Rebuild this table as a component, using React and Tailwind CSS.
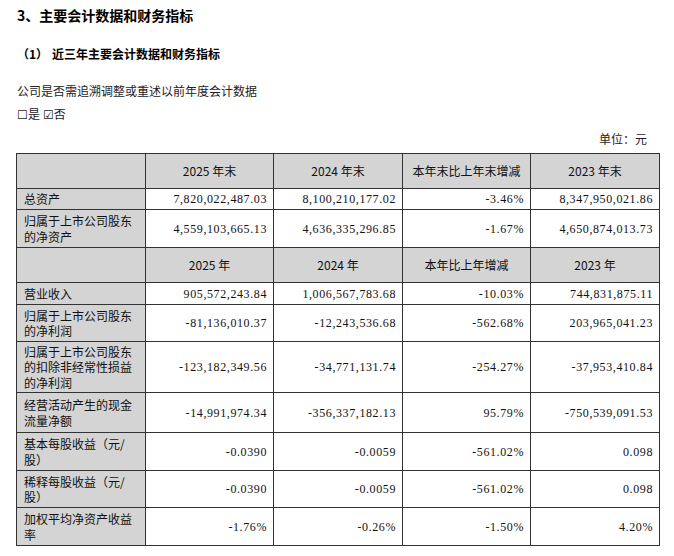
import React from "react";

const cn = '"Noto Sans CJK SC", "Liberation Serif", serif';
const num = '"Liberation Serif", "Noto Sans CJK SC", serif';

const endRows = [
  { label: ["总资产"], h: "h-[21px]", v: ["7,820,022,487.03", "8,100,210,177.02", "-3.46%", "8,347,950,021.86"] },
  { label: ["归属于上市公司股东", "的净资产"], h: "h-[38px]", v: ["4,559,103,665.13", "4,636,335,296.85", "-1.67%", "4,650,874,013.73"] },
];

const yearRows = [
  { label: ["营业收入"], h: "h-[22px]", v: ["905,572,243.84", "1,006,567,783.68", "-10.03%", "744,831,875.11"] },
  { label: ["归属于上市公司股东", "的净利润"], h: "h-[37px]", v: ["-81,136,010.37", "-12,243,536.68", "-562.68%", "203,965,041.23"] },
  { label: ["归属于上市公司股东", "的扣除非经常性损益", "的净利润"], h: "h-[51px]", v: ["-123,182,349.56", "-34,771,131.74", "-254.27%", "-37,953,410.84"] },
  { label: ["经营活动产生的现金", "流量净额"], h: "h-[40px]", v: ["-14,991,974.34", "-356,337,182.13", "95.79%", "-750,539,091.53"] },
  { label: ["基本每股收益（元/", "股）"], h: "h-[38px]", v: ["-0.0390", "-0.0059", "-561.02%", "0.098"] },
  { label: ["稀释每股收益（元/", "股）"], h: "h-[37px]", v: ["-0.0390", "-0.0059", "-561.02%", "0.098"] },
  { label: ["加权平均净资产收益", "率"], h: "h-[38px]", v: ["-1.76%", "-0.26%", "-1.50%", "4.20%"] },
];

const cell = "border-[1.5px] border-[#333]";

const HeadRow = ({ cols }) => (
  <tr className="h-[35px] bg-[#d4d4d4]">
    <td className={cell}></td>
    {cols.map((c) => (
      <td key={c} className={`${cell} text-center`}>
        {c}
      </td>
    ))}
  </tr>
);

const DataRow = ({ row }) => (
  <tr className={row.h}>
    <td className={`${cell} bg-[#d4d4d4] px-[7px] leading-[15.5px] align-middle`}>
      {row.label.map((l, i) => (
        <div key={i}>{l}</div>
      ))}
    </td>
    {row.v.map((x, i) => (
      <td
        key={i}
        className={`${cell} bg-white pr-[6px] text-right tracking-[0.6px]`}
        style={{ fontFamily: num }}
      >
        {x}
      </td>
    ))}
  </tr>
);

export default function App() {
  return (
    <div className="w-[674px] h-[556px] bg-white text-black pl-[17px] pr-[15px]" style={{ fontFamily: cn }}>
      <div className="pt-[5px] text-[14px] leading-[20px] font-bold">3、主要会计数据和财务指标</div>
      <div className="mt-[19px] text-[12px] leading-[20px] font-bold">
        （1）<span className="ml-[4px]">近三年主要会计数据和财务指标</span>
      </div>
      <div className="mt-[17px] text-[12px] leading-[20px] text-[#222]">公司是否需追溯调整或重述以前年度会计数据</div>
      <div className="mt-[3px] text-[12px] leading-[20px] text-[#222]">
        ☐是 ☑否
      </div>
      <div className="mt-[5px] text-[12px] leading-[20px] text-right pr-[12px] text-[#222]">单位：元</div>
      <table className="mt-[4px] -ml-[1px] w-[643px] table-fixed border-collapse text-[12px] leading-[16px] text-[#111]">
        <colgroup>
          <col className="w-[129px]" />
          <col className="w-[128px]" />
          <col className="w-[129px]" />
          <col className="w-[128px]" />
          <col className="w-[129px]" />
        </colgroup>
        <tbody>
          <HeadRow cols={["2025 年末", "2024 年末", "本年末比上年末增减", "2023 年末"]} />
          {endRows.map((r) => (
            <DataRow key={r.label.join("")} row={r} />
          ))}
          <HeadRow cols={["2025 年", "2024 年", "本年比上年增减", "2023 年"]} />
          {yearRows.map((r) => (
            <DataRow key={r.label.join("")} row={r} />
          ))}
        </tbody>
      </table>
    </div>
  );
}
